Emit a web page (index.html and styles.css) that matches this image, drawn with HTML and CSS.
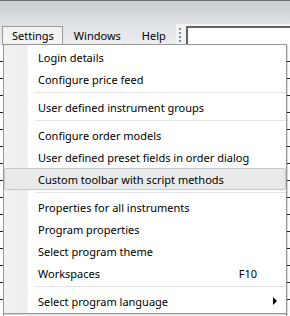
FILE: index.html
```html
<!DOCTYPE html>
<html lang="en">
<head>
    <meta charset="UTF-8">
    <meta name="viewport" content="width=device-width, initial-scale=1.0">
    <title>Settings menu</title>
    <link rel="stylesheet" href="styles.css">
</head>
<body>
    <div class="app">
        <div class="menubar">
            <div class="menu-titles">
                <span class="menu-title active">Settings</span>
                <span class="menu-title">Windows</span>
                <span class="menu-title">Help</span>
            </div>
            <div class="toolbar">
                <span class="grip"></span>
                <input type="text" class="search">
            </div>
        </div>

        <div class="workspace">
            <div class="edge edge-left"></div>
            <div class="edge edge-right"></div>
        </div>

        <div class="dropdown">
            <div class="item">Login details</div>
            <div class="item">Configure price feed</div>
            <div class="separator"></div>
            <div class="item">User defined instrument groups</div>
            <div class="separator"></div>
            <div class="item">Configure order models</div>
            <div class="item">User defined preset fields in order dialog</div>
            <div class="item hover">Custom toolbar with script methods</div>
            <div class="separator"></div>
            <div class="item">Properties for all instruments</div>
            <div class="item">Program properties</div>
            <div class="item">Select program theme</div>
            <div class="item">Workspaces<span class="shortcut">F10</span></div>
            <div class="separator"></div>
            <div class="item">Select program language<span class="submenu-arrow"></span></div>
        </div>
    </div>
</body>
</html>
```

FILE: styles.css
```css
/* General Styling */
body {
    margin: 0;
    padding: 0;
    font-family: 'Segoe UI', 'Noto Sans', sans-serif;
    font-size: 11px;
    color: #000;
    background: #ffffff;
}

.app {
    position: relative;
    width: 290px;
    height: 316px;
    overflow: hidden;
    display: flex;
    flex-direction: column;
}

/* Menu bar */
.menubar {
    height: 45px;
    display: flex;
    align-items: flex-end;
    border-top: 1px solid #6e6e6e;
    box-sizing: border-box;
    background: linear-gradient(#c9cdd1, #dfe2e5 55%, #eceef0);
}

.menu-titles {
    display: flex;
    padding-left: 2px;
    width: 174px;
}

.menu-title {
    height: 18px;
    line-height: 18px;
    padding: 0 9px 0 10px;
    border: 1px solid transparent;
    border-bottom: none;
}

.menu-title.active {
    padding: 0 8px 0 9px;
    background: #f3f3f3;
    border-color: #9a9a9a;
}

.toolbar {
    flex: 1;
    display: flex;
    align-items: flex-end;
    height: 21px;
    padding-left: 3px;
    background: #f2f4f6;
}

.grip {
    width: 2px;
    height: 17px;
    margin-right: 5px;
    background: repeating-linear-gradient(#7f8c99 0 2px, transparent 2px 4px);
}

.search {
    flex: 1;
    height: 17px;
    margin: 0;
    padding: 0;
    border: 1px solid #b9b9b9;
    border-top: 2px solid #646464;
    border-left: 2px solid #646464;
    border-bottom: none;
    background: #ffffff;
}

/* Grid behind the menu */
.workspace {
    flex: 1;
    display: flex;
    justify-content: space-between;
}

.edge {
    width: 3px;
    background: repeating-linear-gradient(#ffffff 0 16px, #222 16px 17px);
}

.edge-left {
    border-right: 1px solid #9a9a9a;
}

.edge-right {
    border-left: 1px solid #7a7a7a;
    background: repeating-linear-gradient(#ffffff 0 16px, #222 16px 17px), #d8d8d8;
}

/* Dropdown */
.dropdown {
    position: absolute;
    left: 3px;
    top: 44px;
    width: 282px;
    padding: 1px 0;
    border: 1px solid #979797;
    background: linear-gradient(90deg, #f1f2f4, #eceef0 23px, #e4e6e8 23px, #ffffff 24px);
    box-shadow: 1px 1px 1px rgba(0, 0, 0, 0.15);
}

.item {
    position: relative;
    height: 22px;
    line-height: 21px;
    padding-left: 34px;
    display: flex;
    align-items: center;
    white-space: nowrap;
    box-sizing: border-box;
    border: 1px solid transparent;
    border-left: none;
    border-right: none;
}

.item.hover {
    background: #e9eaeb;
    border: 1px solid #c6c8ca;
    border-radius: 2px;
    padding-left: 33px;
}

.shortcut {
    margin-left: auto;
    margin-right: 29px;
}

.submenu-arrow {
    margin-left: auto;
    margin-right: 9px;
    width: 0;
    height: 0;
    border-top: 4px solid transparent;
    border-bottom: 4px solid transparent;
    border-left: 4px solid #000;
}

.separator {
    height: 6px;
    margin-left: 31px;
    background: linear-gradient(transparent 2px, #e1e3e4 2px 3px, #ffffff 3px);
}
```
